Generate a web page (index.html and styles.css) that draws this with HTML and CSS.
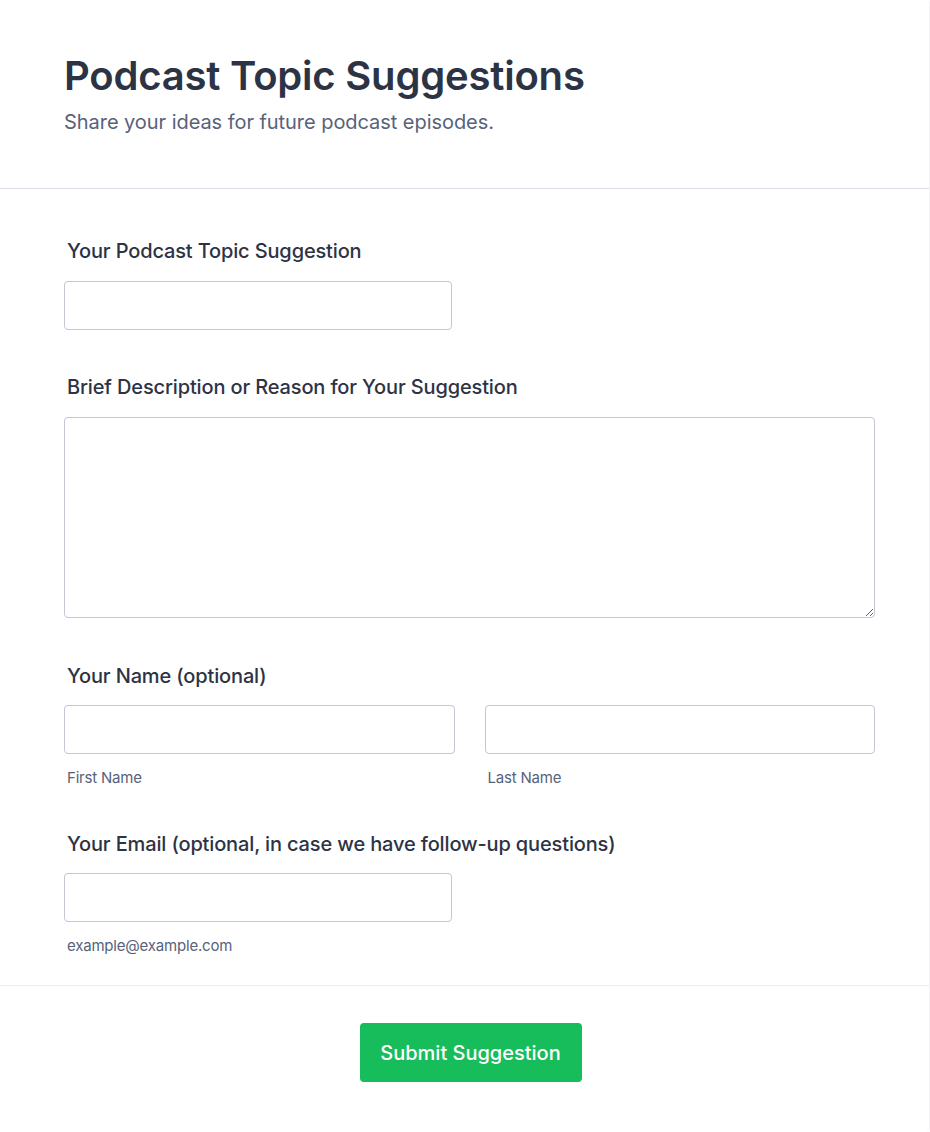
FILE: index.html
```html
<!DOCTYPE html>
<html lang="en">
<head>
<meta charset="utf-8">
<title>Podcast Topic Suggestions</title>
<link rel="stylesheet" href="styles.css">
</head>
<body>
<div class="card">
  <header class="header">
    <h1 class="title">Podcast Topic Suggestions</h1>
    <p class="subtitle">Share your ideas for future podcast episodes.</p>
  </header>
  <form class="form">
    <div class="field">
      <label class="label" for="topic">Your Podcast Topic Suggestion</label>
      <input class="input input-half" id="topic" type="text">
    </div>
    <div class="field">
      <label class="label" for="desc">Brief Description or Reason for Your Suggestion</label>
      <textarea class="input textarea" id="desc"></textarea>
    </div>
    <div class="field field-name">
      <label class="label label-tight" for="first">Your Name (optional)</label>
      <div class="name-row">
        <div class="name-col">
          <input class="input" id="first" type="text">
          <span class="sublabel">First Name</span>
        </div>
        <div class="name-col">
          <input class="input" id="last" type="text">
          <span class="sublabel">Last Name</span>
        </div>
      </div>
    </div>
    <div class="field field-email">
      <label class="label label-tight" for="email">Your Email (optional, in case we have follow-up questions)</label>
      <input class="input input-half" id="email" type="email">
      <span class="sublabel">example@example.com</span>
    </div>
  </form>
  <div class="footer">
    <button class="submit" type="button">Submit Suggestion</button>
  </div>
</div>
</body>
</html>
```
FILE: styles.css
```css
* { box-sizing: border-box; }
html, body { margin: 0; padding: 0; background: #ffffff; }
body { font-family: Inter, "Noto Sans", sans-serif; color: #2c3345; }

.card {
  width: 930px;
  min-height: 1132px;
  background: #fff;
  border-right: 1px solid #f3f3f6;
  border-radius: 0 4px 4px 0;
}

.header {
  padding: 52px 64px 52px;
  border-bottom: 1px solid #dcdce8;
}
.title {
  margin: 0;
  font-size: 40px;
  line-height: 48px;
  font-weight: 600;
  color: #2c3345;
  letter-spacing: -0.2px;
}
.subtitle {
  margin: 8px 0 0;
  font-size: 20px;
  line-height: 28px;
  color: #57627a;
  letter-spacing: -0.05px;
}

.form {
  padding: 48px 54px 29px 64px;
  display: flex;
  flex-direction: column;
  gap: 43px;
  border-bottom: 1px solid #ececf2;
}
.field { display: flex; flex-direction: column; }
.field-name { margin-top: 1px; }
.field-email { margin-top: -1px; }
.label {
  font-size: 20px;
  font-weight: 500;
  line-height: 28px;
  letter-spacing: -0.14px;
  padding-left: 3px;
  margin-bottom: 16px;
  color: #2c3345;
}
.label-tight { margin-bottom: 15px; }
.input {
  display: block;
  height: 49px;
  width: 100%;
  border: 1px solid #c3c6d4;
  border-radius: 4px;
  background: #fff;
  font: inherit;
}
.input-half { width: 388px; }
.textarea { height: 201px; resize: vertical; }

.name-row { display: flex; gap: 30px; }
.name-col { flex: 1; display: flex; flex-direction: column; }
.sublabel {
  font-size: 15px;
  line-height: 20px;
  letter-spacing: -0.2px;
  color: #57627a;
  padding-left: 3px;
  margin-top: 14px;
}

.footer {
  display: flex;
  justify-content: center;
  padding: 37px 0 50px 12px;
}
.submit {
  width: 222px;
  height: 59px;
  border: 0;
  border-radius: 4px;
  background: #18bd5b;
  color: #fff;
  font-family: Inter, "Noto Sans", sans-serif;
  font-size: 20px;
  font-weight: 500;
}
```
